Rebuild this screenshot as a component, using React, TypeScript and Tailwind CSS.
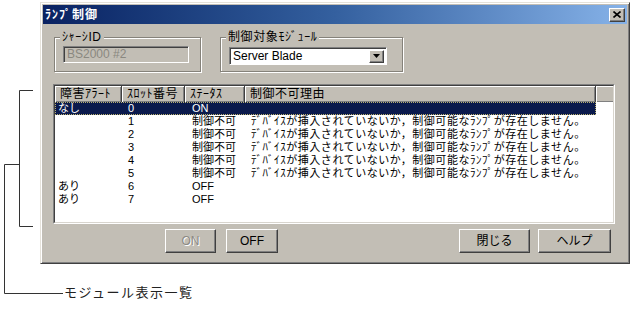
const FONT = "font-['Liberation_Sans','Noto_Sans_CJK_JP',sans-serif]";
const RAISED =
  "border border-t-white border-l-white border-r-[#404040] border-b-[#404040] shadow-[inset_-1px_-1px_0_#808080]";

const REASON = "ﾃﾞﾊﾞｲｽが挿入されていないか，制御可能なﾗﾝﾌﾟが存在しません。";

const rows = [
  { alert: "なし", slot: "0", status: "ON", reason: "" },
  { alert: "", slot: "1", status: "制御不可", reason: REASON },
  { alert: "", slot: "2", status: "制御不可", reason: REASON },
  { alert: "", slot: "3", status: "制御不可", reason: REASON },
  { alert: "", slot: "4", status: "制御不可", reason: REASON },
  { alert: "", slot: "5", status: "制御不可", reason: REASON },
  { alert: "あり", slot: "6", status: "OFF", reason: "" },
  { alert: "あり", slot: "7", status: "OFF", reason: "" },
];

const cols = [
  { label: "障害ｱﾗｰﾄ", w: "w-[67px]" },
  { label: "ｽﾛｯﾄ番号", w: "w-[63px]" },
  { label: "ｽﾃｰﾀｽ", w: "w-[60px]" },
  { label: "制御不可理由", w: "w-[351px]" },
];

function Button({ label, width, disabled }: { label: string; width: string; disabled?: boolean }) {
  return (
    <div className={`${width} h-[24px] ${RAISED} bg-[#c2beb5] flex items-center justify-center text-[12px]`}>
      <span className={disabled ? "text-[#8c8a84] [text-shadow:1px_1px_0_#fff]" : "text-black"}>{label}</span>
    </div>
  );
}

function GroupBox({ label, width, children }: { label: string; width: string; children: React.ReactNode }) {
  return (
    <div className={`relative ${width} h-[35px] border border-[#85827a] shadow-[inset_1px_1px_0_#fff,1px_1px_0_#fff] pt-[8px] pl-[8px]`}>
      <span className="absolute -top-[9px] left-[5px] px-[2px] bg-[#c2beb5] text-[12px] leading-[16px] tracking-[0.6px] text-black">
        {label}
      </span>
      {children}
    </div>
  );
}

export default function App() {
  return (
    <div className={`relative w-[633px] h-[310px] bg-white overflow-hidden ${FONT}`}>
      {/* dialog */}
      <div className="ml-[40px] mt-[2px] w-[590px] h-[262px] border border-[#e5e2da] border-r-[#404040] border-b-[#404040] shadow-[inset_1px_1px_0_#fff,inset_-1px_-1px_0_#808080] p-[2px] bg-[#c2beb5] flex flex-col">
        <div className="h-[19px] bg-gradient-to-r from-[#0a2262] via-[#34609f] to-[#86b2e8] flex items-center justify-between pl-[2px] pr-[2px]">
          <span className="text-white font-bold text-[12px] leading-none tracking-[1px]">ﾗﾝﾌﾟ制御</span>
          <div className={`w-[16px] h-[14px] ${RAISED} bg-[#c2beb5] flex items-center justify-center`}>
            <svg width="8" height="7" viewBox="0 0 8 7">
              <path d="M0.5 0.5 L7.5 6.5 M7.5 0.5 L0.5 6.5" stroke="#000" strokeWidth="1.6" />
            </svg>
          </div>
        </div>

        <div className="flex mt-[13px] ml-[11px] gap-[19px]">
          <GroupBox label="ｼｬｰｼID" width="w-[147px]">
            <div className="w-[126px] h-[17px] border border-t-[#808080] border-l-[#808080] border-r-white border-b-white shadow-[inset_1px_1px_0_#404040] pl-[3px] text-[12px] leading-[15px] text-[#8a8880]">
              BS2000 #2
            </div>
          </GroupBox>
          <GroupBox label="制御対象ﾓｼﾞｭｰﾙ" width="w-[183px]">
            <div className="w-[158px] h-[18px] mt-[1px] border border-t-[#808080] border-l-[#808080] border-r-white border-b-white shadow-[inset_1px_1px_0_#404040] bg-white flex items-center pl-[3px] pr-[2px]">
              <span className="flex-1 text-[12px] leading-none text-black">Server Blade</span>
              <div className={`w-[15px] h-[13px] ${RAISED} bg-[#c2beb5] flex items-center justify-center`}>
                <svg width="7" height="4" viewBox="0 0 7 4">
                  <polygon points="0,0 7,0 3.5,4" fill="#000" />
                </svg>
              </div>
            </div>
          </GroupBox>
        </div>

        {/* list view */}
        <div className="ml-[10px] mt-[12px] w-[562px] h-[140px] border border-t-[#808080] border-l-[#808080] border-r-white border-b-white">
          <div className="h-full border border-t-[#404040] border-l-[#404040] border-r-[#d8d5ce] border-b-[#d8d5ce] bg-white flex flex-col text-[11px] text-black">
            <div className="flex h-[16px] shrink-0">
              {cols.map((c) => (
                <div
                  key={c.label}
                  className={`${c.w} h-full bg-[#c2beb5] border-r border-r-[#404040] shadow-[inset_1px_1px_0_#fff,inset_-1px_-1px_0_#808080] pl-[5px] text-[12px] leading-[16px] tracking-[0.5px]`}
                >
                  {c.label}
                </div>
              ))}
              <div className="flex-1 h-full bg-[#c2beb5] shadow-[inset_1px_1px_0_#fff,inset_0_-1px_0_#808080]" />
            </div>
            {rows.map((r, i) => (
              <div
                key={i}
                className={`flex w-[541px] h-[13px] leading-[13px] ${
                  i === 0 ? "bg-[#0b1a4c] text-white outline-1 outline-dotted outline-[#b8b070] -outline-offset-1" : ""
                }`}
              >
                <div className="w-[67px] pl-[3px]">{r.alert}</div>
                <div className="w-[63px] pl-[6px]">{r.slot}</div>
                <div className="w-[60px] pl-[7px]">{r.status}</div>
                <div className="w-[351px] pl-[6px] whitespace-nowrap tracking-[0.55px]">{r.reason}</div>
              </div>
            ))}
          </div>
        </div>

        <div className="flex mt-[5px] ml-[122px] mr-[16px]">
          <Button label="ON" width="w-[51px]" disabled />
          <div className="ml-[10px]">
            <Button label="OFF" width="w-[52px]" />
          </div>
          <div className="ml-auto">
            <Button label="閉じる" width="w-[71px]" />
          </div>
          <div className="ml-[8px]">
            <Button label="ヘルプ" width="w-[73px]" />
          </div>
        </div>
      </div>

      <div className="ml-[64px] mt-[21px] text-[13px] leading-[16px] tracking-[1.5px] text-[#222]">モジュール表示一覧</div>

      {/* leader lines */}
      <svg className="absolute left-0 top-0 pointer-events-none" width="633" height="310">
        <path
          d="M33 90.5 H19.5 V226.5 H33 M19.5 164.5 H4.5 V293.5 H63"
          fill="none"
          stroke="#333"
          strokeWidth="1"
        />
      </svg>
    </div>
  );
}
